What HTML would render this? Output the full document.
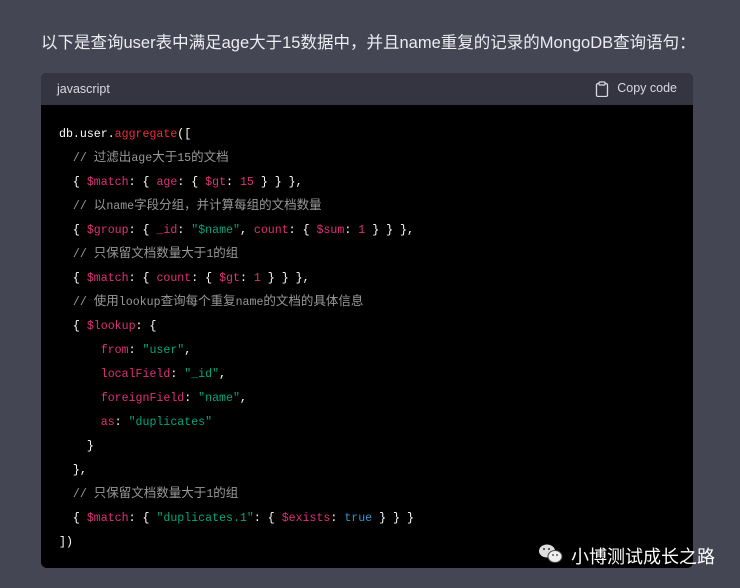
<!DOCTYPE html>
<html><head><meta charset="utf-8"><style>
html,body{margin:0;padding:0;}
body{width:740px;height:588px;background:#444654;position:relative;overflow:hidden;font-family:"Liberation Sans","Noto Sans CJK SC",sans-serif;}
.title{position:absolute;left:41px;top:29px;font-size:16.5px;color:#ececf1;white-space:nowrap;}
.box{position:absolute;left:41px;top:73px;width:652px;height:495px;background:#000;border-radius:6px;overflow:hidden;}
.hdr{height:32px;background:#343541;color:#d9d9e3;font-size:12.5px;position:relative;}
.hdr .l{position:absolute;left:16px;top:9px;}
.hdr .r{position:absolute;right:16px;top:8px;}
.hdr svg{position:absolute;left:-22px;top:0;}
.code{position:absolute;left:18px;top:50px;font-family:"Liberation Mono","Noto Sans CJK SC",monospace;font-size:11.6px;color:#fff;}
.code div{height:24px;line-height:24px;white-space:pre;overflow:visible;}
.z{font-size:12.5px;line-height:0;}
.c{color:#999}.k{color:#df3079}.s{color:#00a67d}.f{color:#f22c3d}.b{color:#2e95d3}
.wm{position:absolute;top:543px;color:#fff;font-size:18px;font-family:"Liberation Sans","Noto Sans CJK SC",sans-serif;}
</style></head><body>
<div class="title">以下是查询user表中满足age大于15数据中，并且name重复的记录的MongoDB查询语句：</div>
<div class="box">
<div class="hdr"><span class="l">javascript</span><span class="r" style="position:absolute"><svg width="14" height="16" viewBox="0 0 14 16"><rect x="1.5" y="2.5" width="11" height="13" rx="1.5" fill="none" stroke="#d9d9e3" stroke-width="1.3"/><rect x="4" y="1" width="6" height="3" rx="0.8" fill="#343541" stroke="#d9d9e3" stroke-width="1.2"/></svg>Copy code</span></div>
<div class="code">
<div>db.user.<span class="f">aggregate</span>([</div>
<div>  <span class="c">// <span class="z">过滤出</span>age<span class="z">大于</span>15<span class="z">的文档</span></span></div>
<div>  { <span class="k">$match</span>: { <span class="k">age</span>: { <span class="k">$gt</span>: <span class="k">15</span> } } },</div>
<div>  <span class="c">// <span class="z">以</span>name<span class="z">字段分组，并计算每组的文档数量</span></span></div>
<div>  { <span class="k">$group</span>: { <span class="k">_id</span>: <span class="s">"$name"</span>, <span class="k">count</span>: { <span class="k">$sum</span>: <span class="k">1</span> } } },</div>
<div>  <span class="c">// <span class="z">只保留文档数量大于</span>1<span class="z">的组</span></span></div>
<div>  { <span class="k">$match</span>: { <span class="k">count</span>: { <span class="k">$gt</span>: <span class="k">1</span> } } },</div>
<div>  <span class="c">// <span class="z">使用</span>lookup<span class="z">查询每个重复</span>name<span class="z">的文档的具体信息</span></span></div>
<div>  { <span class="k">$lookup</span>: {</div>
<div>      <span class="k">from</span>: <span class="s">"user"</span>,</div>
<div>      <span class="k">localField</span>: <span class="s">"_id"</span>,</div>
<div>      <span class="k">foreignField</span>: <span class="s">"name"</span>,</div>
<div>      <span class="k">as</span>: <span class="s">"duplicates"</span></div>
<div>    }</div>
<div>  },</div>
<div>  <span class="c">// <span class="z">只保留文档数量大于</span>1<span class="z">的组</span></span></div>
<div>  { <span class="k">$match</span>: { <span class="s">"duplicates.1"</span>: { <span class="k">$exists</span>: <span class="b">true</span> } } }</div>
<div>])</div>
</div>
</div>
<svg style="position:absolute;left:538px;top:543px" width="26" height="22" viewBox="0 0 26 22"><ellipse cx="9" cy="8" rx="8" ry="6.5" fill="#ddd"/><ellipse cx="17" cy="13.5" rx="7" ry="6" fill="#eee" stroke="#444" stroke-width="1"/><circle cx="6" cy="6" r="1" fill="#333"/><circle cx="11" cy="6" r="1" fill="#333"/><circle cx="15" cy="12" r="0.9" fill="#333"/><circle cx="19" cy="12" r="0.9" fill="#333"/></svg>
<div class="wm" style="left:571px">小博测试成长之路</div>
</body></html>
